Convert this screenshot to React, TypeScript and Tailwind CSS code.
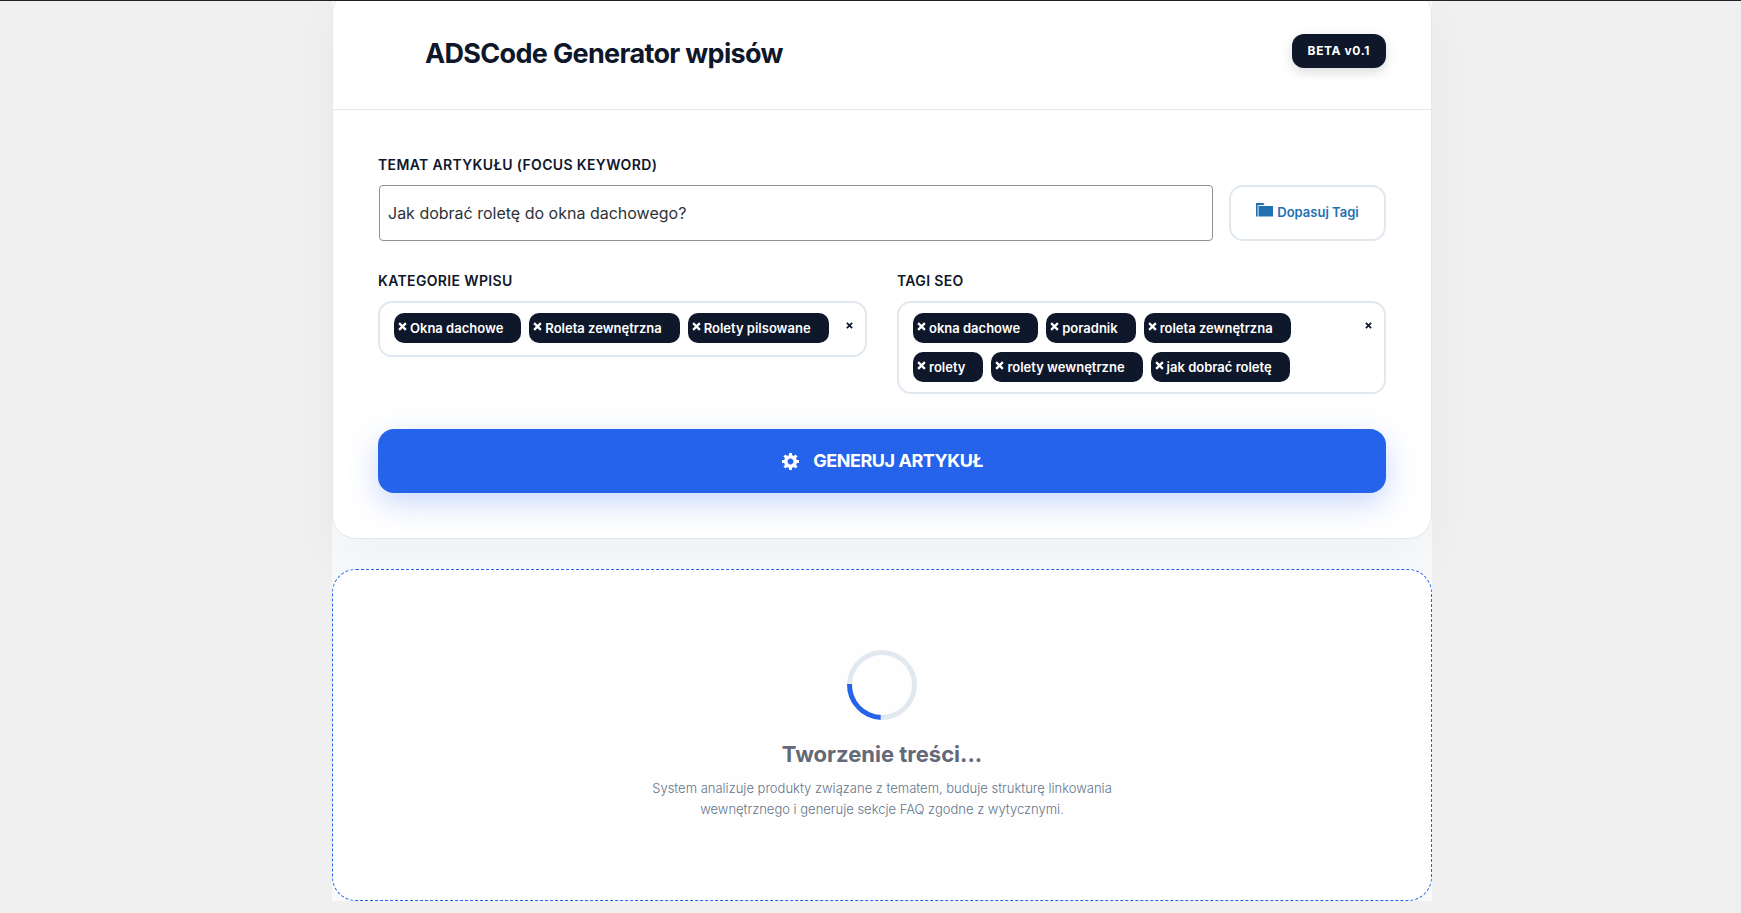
import React, { useState } from 'react';

const CATEGORIES = ['Okna dachowe', 'Roleta zewnętrzna', 'Rolety pilsowane'];

const TAGS = [
  'okna dachowe',
  'poradnik',
  'roleta zewnętrzna',
  'rolety',
  'rolety wewnętrzne',
  'jak dobrać roletę',
];

const LABEL_CLASS = 'block text-sm leading-5 font-semibold tracking-wide uppercase text-[#0f172a]';

interface TagSelectProps {
  id: string;
  label: string;
  initial: string[];
}

const TagSelect: React.FC<TagSelectProps> = ({ id, label, initial }) => {
  const [items, setItems] = useState<string[]>(initial);

  return (
    <div>
      <span id={id} className={LABEL_CLASS}>
        {label}
      </span>
      <div
        role="group"
        aria-labelledby={id}
        className="mt-2.5 flex min-h-14 items-start justify-between rounded-[14px] border-2 border-[#e2e8f0] bg-white py-2.5 pl-3.5 pr-2.5"
      >
        <ul className="flex min-w-0 flex-1 flex-wrap gap-x-2 gap-y-[9px]">
          {items.map((item) => (
            <li
              key={item}
              className="flex items-center rounded-[10px] bg-[#0f172a] py-[5px] pl-1 pr-[18px] text-[13px] leading-5 font-semibold text-white"
            >
              <button
                type="button"
                aria-label={`Usuń ${item}`}
                onClick={() => setItems((prev) => prev.filter((i) => i !== item))}
                className="flex h-5 w-3 items-start pt-1"
              >
                <Cross className="size-[9px]" />
              </button>
              {item}
            </li>
          ))}
        </ul>
        <button
          type="button"
          aria-label="Usuń wszystkie"
          onClick={() => setItems([])}
          className="mt-2 flex h-3 w-3 shrink-0 items-start justify-center text-[#0f172a]"
        >
          <Cross className="mt-px size-[7px]" />
        </button>
      </div>
    </div>
  );
};

const Cross: React.FC<{ className: string }> = ({ className }) => (
  <svg viewBox="0 0 8 8" className={className} stroke="currentColor" strokeWidth="2" fill="none">
    <path d="M1 1l6 6M7 1L1 7" />
  </svg>
);

const FolderIcon: React.FC = () => (
  <svg viewBox="0 0 17 14" className="mb-1.5 h-3.5 w-[17px]" fill="currentColor">
    <path d="M0 0h7.5l1 2H1.5v11.5H0z" />
    <path d="M3 3h14v10.5H3z" />
    <path d="M1.5 2H3v11.5H1.5z" opacity="0.5" />
  </svg>
);

// dashicons style gear
const GearIcon: React.FC = () => (
  <svg viewBox="0 0 20 20" className="size-5" fill="currentColor">
    <path d="M18 12h-2.180c-.17.700-.44 1.350-.810 1.930l1.540 1.540-2.100 2.100-1.540-1.540c-.58.360-1.230.630-1.910.790V19H8v-2.180c-.68-.16-1.330-.43-1.910-.79l-1.540 1.540-2.120-2.120 1.540-1.540c-.36-.58-.63-1.230-.79-1.910H1V9.030h2.170c.16-.7.440-1.350.8-1.940L2.430 5.550l2.100-2.100 1.540 1.540c.58-.37 1.240-.64 1.930-.81V2h3v2.180c.68.160 1.330.430 1.910.79l1.540-1.540 2.120 2.120-1.540 1.540c.36.590.64 1.240.8 1.940H18V12zm-8.500 1.500c1.660 0 3-1.340 3-3s-1.340-3-3-3-3 1.340-3 3 1.340 3 3 3z" />
  </svg>
);

const App: React.FC = () => {
  const [topic, setTopic] = useState('Jak dobrać roletę do okna dachowego?');

  return (
    <div className="min-h-screen overflow-hidden border-t border-[#1d2327] bg-[#f0f0f0] pb-3 pl-[23px] font-[Inter,'Open_Sans',sans-serif]">
      <main className="mx-auto max-w-[1100px] bg-[#f8fafc]">
        <section className="-mt-3 rounded-3xl border border-[#e2e8f0] bg-white shadow-[0_20px_50px_rgba(0,0,0,0.04)]">
          <header className="flex items-start justify-between border-b border-[#e2e8f0] px-[45px] pt-11 pb-[35px]">
            <h1 className="pl-[47px] text-[27px] leading-10 font-bold tracking-tight text-[#0f172a]">
              ADSCode Generator wpisów
            </h1>
            <span className="rounded-xl bg-[#0f172a] px-4 py-2 text-xs leading-[18px] font-bold tracking-wider text-white shadow-[0_4px_12px_rgba(0,0,0,0.15)]">
              BETA v0.1
            </span>
          </header>

          <form className="px-[45px] pt-[45px] pb-[45px]" onSubmit={(e) => e.preventDefault()}>
            <label htmlFor="topic" className={LABEL_CLASS}>
              Temat artykułu (Focus Keyword)
            </label>
            <div className="mt-2.5 flex gap-4">
              <input
                id="topic"
                type="text"
                value={topic}
                onChange={(e) => setTopic(e.target.value)}
                className="ml-px h-14 min-w-0 flex-1 rounded border border-[#8c8f94] bg-white px-2 text-base text-[#2c3338]"
              />
              <button
                type="button"
                className="flex h-14 w-[157px] items-center justify-center gap-1 rounded-[14px] border-2 border-[#e2e8f0] bg-white text-[13px] font-semibold text-[#2271b1]"
              >
                <FolderIcon />
                Dopasuj Tagi
              </button>
            </div>

            <div className="mt-[30px] grid grid-cols-2 gap-[30px]">
              <TagSelect id="categories" label="Kategorie wpisu" initial={CATEGORIES} />
              <TagSelect id="tags" label="Tagi SEO" initial={TAGS} />
            </div>

            <button
              type="submit"
              className="mt-[35px] flex h-16 w-full items-center justify-center gap-3 rounded-2xl bg-[#2563eb] text-lg font-bold tracking-tight text-white uppercase shadow-[0_10px_30px_rgba(37,99,235,0.25)]"
            >
              <GearIcon />
              Generuj artykuł
            </button>
          </form>
        </section>

        <section className="relative mt-[30px] rounded-3xl border border-dashed border-[#2563eb] bg-[#fefefe] px-6 pt-20 pb-20 text-center">
          <div className="mx-auto size-[70px] rotate-[-133deg] rounded-full border-[5px] border-[#e2e8f0] border-t-[#2563eb]" />
          <h2 className="mt-[18px] text-[22px] leading-8 font-bold text-[#636978]">Tworzenie treści...</h2>
          <p className="mx-auto mt-2 max-w-[480px] text-[13px] leading-[21px] font-light text-[#64748b]">
            System analizuje produkty związane z tematem, buduje strukturę linkowania wewnętrznego i
            generuje sekcje FAQ zgodne z wytycznymi.
          </p>
        </section>
      </main>
    </div>
  );
};

export default App;
